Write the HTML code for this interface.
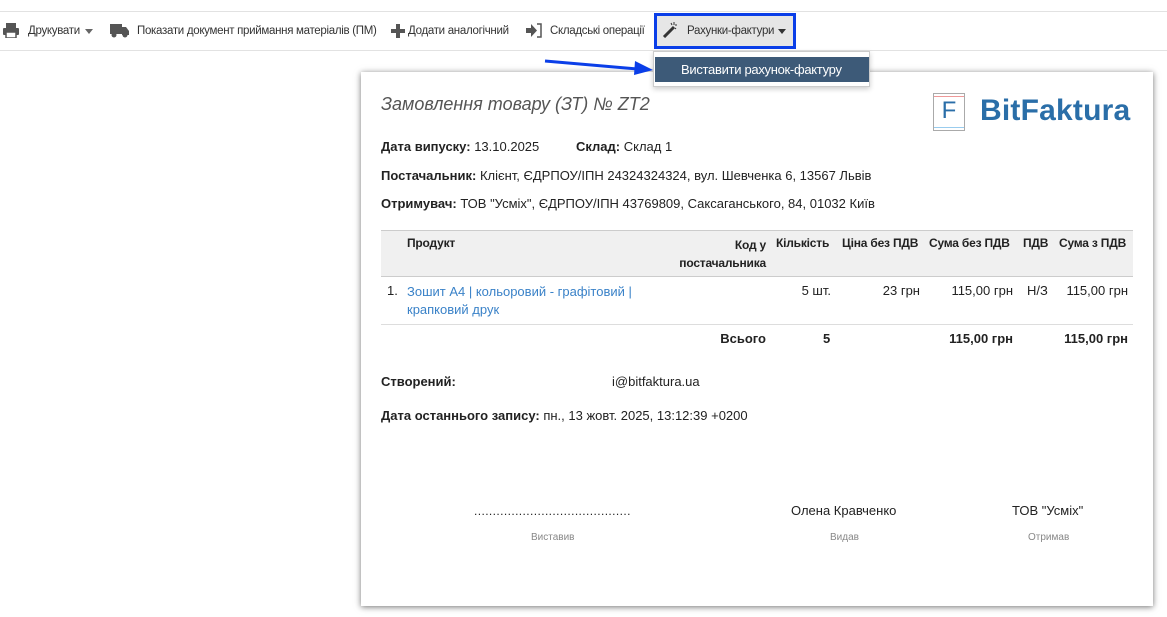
<!DOCTYPE html>
<html><head><meta charset="utf-8"><style>
*{margin:0;padding:0;box-sizing:border-box}
body{width:1167px;height:617px;background:#fff;font-family:"Liberation Sans",Arial,sans-serif;color:#222;position:relative;overflow:hidden;font-size:13px;letter-spacing:0}
.a{position:absolute;white-space:nowrap}
.tb{position:absolute;left:0;top:11px;width:1167px;height:40px;border-top:1px solid #e2e2e2;border-bottom:1px solid #e2e2e2;background:#fff}
.ti{position:absolute;top:24px;font-size:11.5px;line-height:14px;color:#333;letter-spacing:-0.3px}
.b{font-weight:bold}
.paper{position:absolute;left:361px;top:72px;width:792px;height:534px;background:#fff;box-shadow:0 1px 6px rgba(0,0,0,.55)}
.r{text-align:right}
.h{font-size:12px;letter-spacing:-0.2px}
</style></head><body>
<div class="tb"></div>
<svg class="a" style="left:3px;top:23px" width="16" height="15" viewBox="0 0 16 15"><rect x="3" y="0" width="10" height="5" fill="#555"/><rect x="0" y="5" width="16" height="7" rx="1" fill="#555"/><rect x="3" y="9" width="10" height="6" fill="#fff" stroke="#555" stroke-width="1.5"/></svg>
<div class="ti" style="left:28px">Друкувати</div>
<svg class="a" style="left:85px;top:29px" width="8" height="5"><path d="M0 0h8L4 5z" fill="#666"/></svg>
<svg class="a" style="left:110px;top:23px" width="20" height="15" viewBox="0 0 20 15"><rect x="0" y="1" width="12" height="10" fill="#555"/><path d="M12 4h4l3 4v4h-7z" fill="#555"/><circle cx="4" cy="12" r="2.5" fill="#555"/><circle cx="15" cy="12" r="2.5" fill="#555"/></svg>
<div class="ti" style="left:137px">Показати документ приймання матеріалів (ПМ)</div>
<svg class="a" style="left:391px;top:24px" width="14" height="14"><path d="M5 0h4v5h5v4H9v5H5V9H0V5h5z" fill="#555"/></svg>
<div class="ti" style="left:408px">Додати аналогічний</div>
<svg class="a" style="left:526px;top:23px" width="16" height="15" viewBox="0 0 16 15"><path d="M0 5h5V1l6 6.5L5 14v-4H0z" fill="#555"/><path d="M11 1h4v13h-4" fill="none" stroke="#555" stroke-width="1.5"/></svg>
<div class="ti" style="left:550px">Складські операції</div>
<div class="a" style="left:654px;top:13px;width:142px;height:36px;border:3px solid #0a3ee8;background:#e6e6e6"></div>
<svg class="a" style="left:662px;top:22px" width="16" height="16" viewBox="0 0 16 16"><path d="M2 15L12 5" stroke="#333" stroke-width="3"/><path d="M12 0v3M9 1l1 2M15 3h-2M14 7l-1-1" stroke="#333" stroke-width="1"/></svg>
<div class="ti" style="left:687px">Рахунки-фактури</div>
<svg class="a" style="left:778px;top:29px" width="8" height="5"><path d="M0 0h8L4 5z" fill="#333"/></svg>
<div class="paper"></div>
<div class="a" style="left:653px;top:51px;width:217px;height:36px;background:#fff;border:1px solid #ccc;box-shadow:0 2px 5px rgba(0,0,0,.2)"></div>
<div class="a" style="left:655px;top:57px;width:214px;height:25px;background:#3d5a78;color:#fff;font-size:13px;line-height:25px;padding-left:26px;letter-spacing:-0.3px">Виставити рахунок-фактуру</div>
<svg class="a" style="left:543px;top:56px" width="112" height="20"><path d="M2 5L95 13" stroke="#0a3ee8" stroke-width="3"/><path d="M92 5l18 9-19 5z" fill="#0a3ee8"/></svg>
<div class="a" style="left:381px;top:94px;font-size:18px;font-style:italic;color:#555">Замовлення товару (ЗТ) № ZT2</div>
<div class="a" style="left:933px;top:93px;width:32px;height:38px;border:1px solid #aaa;color:#2a6ea8;font-size:24px;text-align:center;line-height:34px;box-shadow:inset 0 2px 0 #fff,inset 0 3px 0 #e99,inset 0 -2px 0 #fff,inset 0 -3px 0 #9ce">F</div>
<div class="a" style="left:980px;top:94px;font-size:30px;font-weight:bold;color:#2a6ea8;letter-spacing:0.2px">BitFaktura</div>
<div class="a" style="left:381px;top:139px"><span class="b">Дата випуску:</span> 13.10.2025</div>
<div class="a" style="left:576px;top:139px"><span class="b">Склад:</span> Склад 1</div>
<div class="a" style="left:381px;top:168px"><span class="b">Постачальник:</span> Клієнт, ЄДРПОУ/ІПН 24324324324, вул. Шевченка 6, 13567 Львів</div>
<div class="a" style="left:381px;top:196px"><span class="b">Отримувач:</span> ТОВ "Усміх", ЄДРПОУ/ІПН 43769809, Саксаганського, 84, 01032 Київ</div>
<div class="a" style="left:381px;top:230px;width:752px;height:47px;background:#f0f0f0;border-top:1px solid #ccc;border-bottom:1px solid #ccc"></div>
<div class="a b h" style="left:407px;top:236px">Продукт</div>
<div class="a b r h" style="left:660px;top:236px;width:106px;line-height:18px">Код у<br>постачальника</div>
<div class="a b h" style="left:776px;top:236px">Кількість</div>
<div class="a b h" style="left:842px;top:236px">Ціна без ПДВ</div>
<div class="a b h" style="left:929px;top:236px">Сума без ПДВ</div>
<div class="a b h" style="left:1023px;top:236px">ПДВ</div>
<div class="a b h" style="left:1059px;top:236px">Сума з ПДВ</div>
<div class="a" style="left:387px;top:283px">1.</div>
<div class="a" style="left:407px;top:283px;color:#3a82c8;line-height:18px">Зошит А4 | кольоровий - графітовий |<br>крапковий друк</div>
<div class="a r" style="left:760px;top:283px;width:71px">5 шт.</div>
<div class="a r" style="left:840px;top:283px;width:80px">23 грн</div>
<div class="a r" style="left:920px;top:283px;width:93px">115,00 грн</div>
<div class="a" style="left:1027px;top:283px">Н/З</div>
<div class="a r" style="left:1050px;top:283px;width:78px">115,00 грн</div>
<div class="a" style="left:381px;top:324px;width:752px;border-top:1px solid #ddd"></div>
<div class="a b r" style="left:700px;top:331px;width:66px">Всього</div>
<div class="a b" style="left:823px;top:331px">5</div>
<div class="a b r" style="left:920px;top:331px;width:93px">115,00 грн</div>
<div class="a b r" style="left:1050px;top:331px;width:78px">115,00 грн</div>
<div class="a" style="left:381px;top:374px"><span class="b">Створений:</span></div>
<div class="a" style="left:612px;top:374px">i@bitfaktura.ua</div>
<div class="a" style="left:381px;top:408px"><span class="b">Дата останнього запису:</span> пн., 13 жовт. 2025, 13:12:39 +0200</div>
<div class="a" style="left:474px;top:504px;font-size:12px;letter-spacing:0.4px">..........................................</div>
<div class="a" style="left:791px;top:503px">Олена Кравченко</div>
<div class="a" style="left:1012px;top:503px">ТОВ "Усміх"</div>
<div class="a" style="left:531px;top:532px;font-size:10px;color:#888">Виставив</div>
<div class="a" style="left:830px;top:532px;font-size:10px;color:#888">Видав</div>
<div class="a" style="left:1028px;top:532px;font-size:10px;color:#888">Отримав</div>
</body></html>
